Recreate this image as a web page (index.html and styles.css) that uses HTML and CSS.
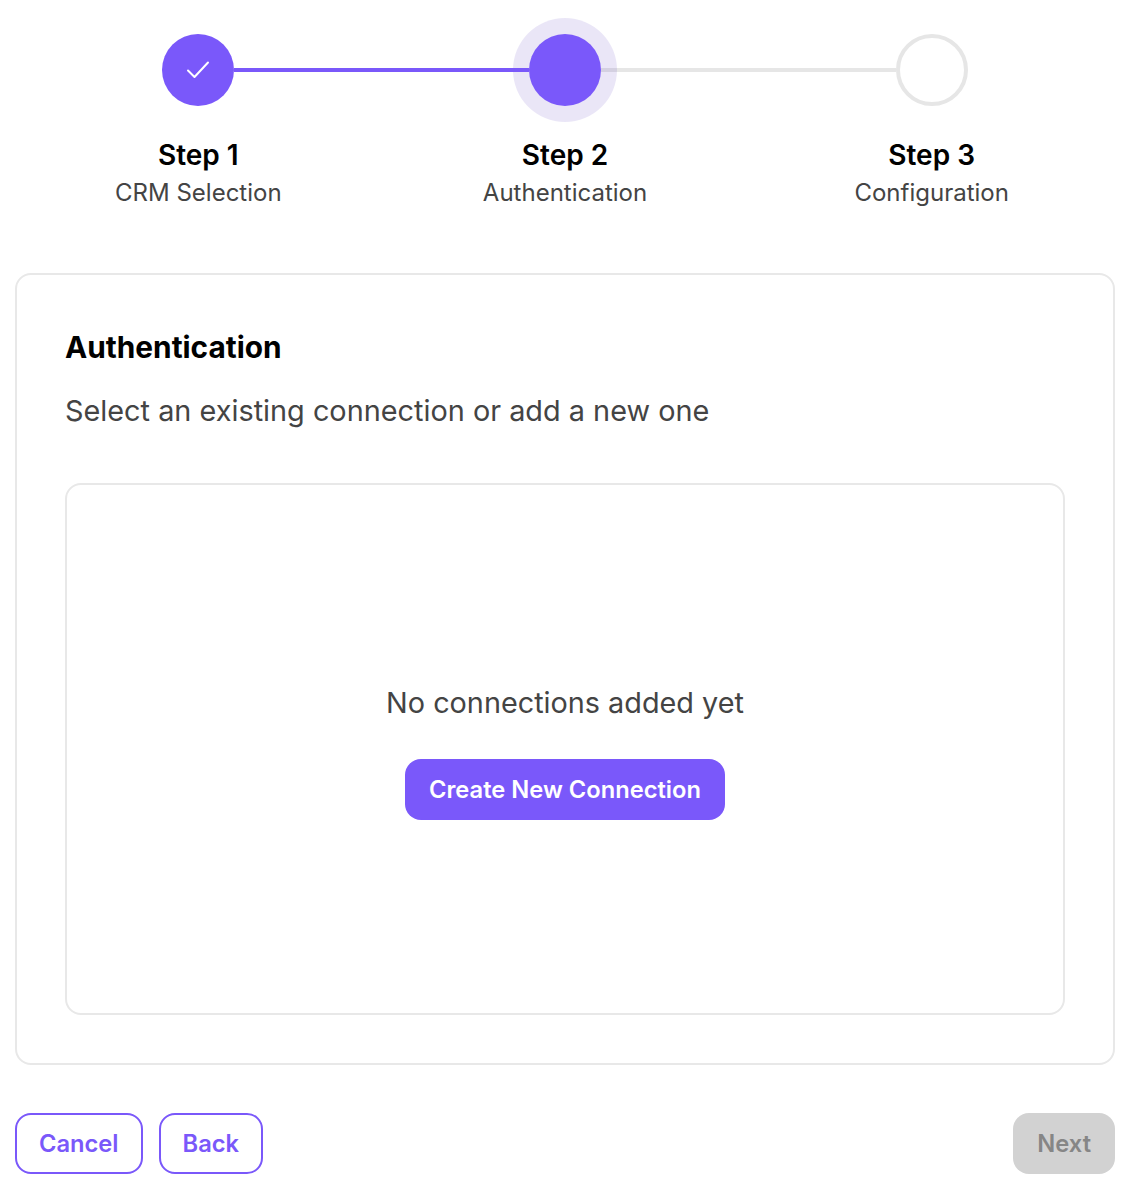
FILE: index.html
```html
<!DOCTYPE html>
<html lang="en">
<head>
  <meta charset="UTF-8">
  <meta name="viewport" content="width=device-width, initial-scale=1.0">
  <title>Authentication</title>
  <link rel="stylesheet" href="styles.css">
</head>
<body>
  <div class="container">
    <div class="stepper">
      <div class="track">
        <div class="dot dot-done">
          <svg class="check" width="24" height="20" viewBox="0 0 24 20" fill="none">
            <path d="M2 10.5 L8.5 17 L22 2.5" stroke="#fff" stroke-width="2" stroke-linecap="round" stroke-linejoin="round"/>
          </svg>
        </div>
        <div class="line line-done"></div>
        <div class="dot dot-active"></div>
        <div class="line"></div>
        <div class="dot dot-todo"></div>
      </div>
      <div class="labels">
        <div class="label">
          <div class="label-title">Step 1</div>
          <div class="label-sub">CRM Selection</div>
        </div>
        <div class="label">
          <div class="label-title">Step 2</div>
          <div class="label-sub">Authentication</div>
        </div>
        <div class="label">
          <div class="label-title">Step 3</div>
          <div class="label-sub">Configuration</div>
        </div>
      </div>
    </div>

    <div class="card">
      <h2>Authentication</h2>
      <p class="subtitle">Select an existing connection or add a new one</p>
      <div class="connections">
        <p class="empty">No connections added yet</p>
        <button type="button" class="btn btn-primary">Create New Connection</button>
      </div>
    </div>

    <div class="footer">
      <div class="footer-left">
        <button type="button" class="btn btn-outline">Cancel</button>
        <button type="button" class="btn btn-outline">Back</button>
      </div>
      <button type="button" class="btn btn-disabled" disabled>Next</button>
    </div>
  </div>
</body>
</html>
```

FILE: styles.css
```css
* {
  box-sizing: border-box;
}

body {
  margin: 0;
  background-color: white;
  font-family: Inter, "Noto Sans", sans-serif;
}

.container {
  width: 1100px;
  margin-left: 15px;
  padding-top: 34px;
}

.track {
  display: flex;
  align-items: center;
  padding: 0 147px;
}

.dot {
  position: relative;
  flex: none;
  display: flex;
  align-items: center;
  justify-content: center;
  width: 72px;
  height: 72px;
  border-radius: 50%;
}

.dot-done,
.dot-active {
  background-color: #7a58fa;
}

.dot-active {
  box-shadow: 0 0 0 16px rgba(90, 60, 190, 0.13);
}

.dot-todo {
  background-color: white;
  border: 4px solid #e6e6e6;
}

.line {
  flex: 1;
  height: 4px;
  background-color: #e6e6e6;
}

.line-done {
  position: relative;
  z-index: 1;
  background-color: #7a58fa;
}

.labels {
  display: grid;
  grid-template-columns: repeat(3, 1fr);
  margin-top: 32px;
  text-align: center;
}

.label-title {
  font-size: 28px;
  line-height: 34px;
  font-weight: 600;
  color: #000;
}

.label-sub {
  margin-top: 5px;
  font-size: 24px;
  line-height: 32px;
  color: #444;
}

.card {
  margin-top: 64px;
  height: 792px;
  padding: 50px 48px;
  border: 2px solid #e8e8e8;
  border-radius: 16px;
}

.card h2 {
  margin: 0;
  font-size: 29.8px;
  line-height: 44px;
  font-weight: 700;
  color: #000;
}

.subtitle {
  margin: 20px 0 0;
  font-size: 28.85px;
  line-height: 44px;
  color: #444;
}

.connections {
  display: flex;
  flex-direction: column;
  align-items: center;
  justify-content: center;
  height: 532px;
  margin-top: 50px;
  padding-top: 3px;
  border: 2px solid #e8e8e8;
  border-radius: 16px;
}

.empty {
  margin: 0 0 34px;
  font-size: 28.8px;
  line-height: 44px;
  color: #444;
}

.btn {
  height: 61px;
  padding: 0 24px;
  border: none;
  border-radius: 16px;
  font-family: inherit;
  font-size: 23.7px;
  font-weight: 600;
}

.btn-primary {
  background-color: #7a58fa;
  color: white;
}

.btn-outline {
  padding: 0 22px;
  background-color: white;
  border: 2px solid #7a58fa;
  color: #7a58fa;
}

.btn-disabled {
  background-color: #d2d2d2;
  color: #868686;
}

.footer {
  display: flex;
  justify-content: space-between;
  margin-top: 48px;
}

.footer-left {
  display: flex;
  gap: 16px;
}
```
